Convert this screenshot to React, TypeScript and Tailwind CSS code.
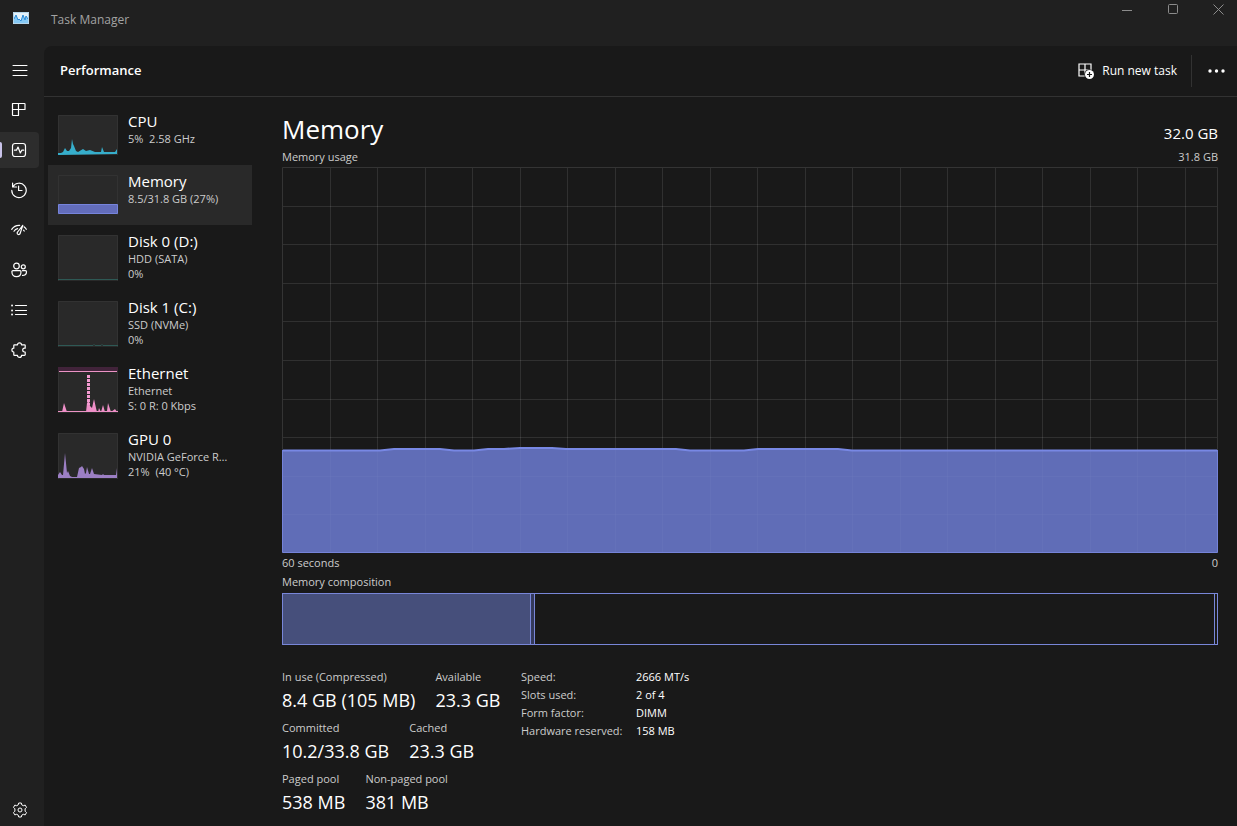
import type { ReactNode } from 'react';
import clsx from 'clsx';

const Icon = ({ children }: { children: ReactNode }) => (
  <svg
    width="18"
    height="18"
    viewBox="0 0 18 18"
    fill="none"
    stroke="currentColor"
    strokeWidth="1.2"
    strokeLinecap="round"
    strokeLinejoin="round"
    aria-hidden="true"
  >
    {children}
  </svg>
);

const navItems = [
  {
    label: 'Processes',
    icon: (
      <Icon>
        <path d="M2.5 2.5h12a.5.5 0 0 1 .5.5v5.5H8.5v6H3a.5.5 0 0 1-.5-.5zM8.5 2.5v6M2.5 8.5h6" />
      </Icon>
    ),
  },
  {
    label: 'Performance',
    active: true,
    icon: (
      <Icon>
        <rect x="2.5" y="2.5" width="13" height="13" rx="2.5" />
        <path d="M4.5 9.2h2L8 6l2.3 6 1.5-2.8h1.9" />
      </Icon>
    ),
  },
  {
    label: 'App history',
    icon: (
      <Icon>
        <path d="M2.6 2v4h4M2.9 5.6A7.2 7.2 0 1 1 1.8 9.4M8.6 5v4.5H12" />
      </Icon>
    ),
  },
  {
    label: 'Startup apps',
    icon: (
      <Icon>
        <path d="M1.7 8.3a9 9 0 0 1 8-4M14 5.8a9 9 0 0 1 2.3 2.5M4 10.2a6 6 0 0 1 3.6-2.6M13.6 9.2l.6.8" />
        <path d="M12.8 4.4 7.6 11a1.5 1.5 0 1 0 2.5 1.5z" />
      </Icon>
    ),
  },
  {
    label: 'Users',
    icon: (
      <Icon>
        <circle cx="6.5" cy="5" r="2.8" />
        <circle cx="13.3" cy="5.8" r="2" />
        <path d="M3 9.7h7a1 1 0 0 1 1 1c0 3-1.6 5-4.500 5s-4.600-2-4.600-5a1 1 0 0 1 1.100-1zM12.500 9.700h3a1 1 0 0 1 1 1c0 2.300-1.300 3.700-4 3.700" />
      </Icon>
    ),
  },
  {
    label: 'Details',
    icon: (
      <Icon>
        <path d="M5.500 4.500h11M5.500 9.500h11M5.500 13.500h11" />
        <path d="M2 4.500h.1M2 9.500h.1M2 13.500h.1" strokeWidth="1.800" />
      </Icon>
    ),
  },
  {
    label: 'Services',
    icon: (
      <Icon>
        <path d="M4.500 3.800h3a2 2 0 0 1 4 0h3a.7.7 0 0 1 .7.7v2.700h-.6a1.900 1.900 0 0 0 0 3.800h.6v2.700a.7.7 0 0 1-.7.7h-3a2 2 0 0 1-4 0h-3a.7.7 0 0 1-.7-.7V11a1.900 1.900 0 0 1 0-3.800V4.500a.7.7 0 0 1 .7-.7z" />
      </Icon>
    ),
  },
];

type Resource = {
  name: string;
  lines: string[];
  chart: ReactNode;
  selected?: boolean;
};

const resources: Resource[] = [
  {
    name: 'CPU',
    lines: ['5%  2.58 GHz'],
    chart: (
      <path
        d="M0 40v-2h3l2-1 2-4 2 3h2l2-3 1-9 1 5 1 2 2 5 2 1 5-3 3 2 4-1 5 2h6l1-5 2 5 11 0 2-3v5z"
        fill="#36aecb"
      />
    ),
  },
  {
    name: 'Memory',
    lines: ['8.5/31.8 GB (27%)'],
    selected: true,
    chart: <path d="M.5 29.500h59v9H.5z" fill="#636dbb" stroke="#7684dc" />,
  },
  {
    name: 'Disk 0 (D:)',
    lines: ['HDD (SATA)', '0%'],
    chart: <path d="M0 44.500h60" stroke="#2e5955" />,
  },
  {
    name: 'Disk 1 (C:)',
    lines: ['SSD (NVMe)', '0%'],
    chart: <path d="M0 44.500h35l1-1 1 1h6l1-1 1 1h15" stroke="#2e5955" />,
  },
  {
    name: 'Ethernet',
    lines: ['Ethernet', 'S: 0 R: 0 Kbps'],
    chart: (
      <>
        <path d="M0 0h60v4H0z" fill="#41233a" />
        <path d="M1 4.500h58M0 44.500h60" stroke="#ec93c5" />
        <path
          d="M4 45l2-9 2 6 1 3zM28 45l1-9 2-3 1 6 2 2 2-9 2 9 1 4zM40 45l1-4 2 4 2-7 2 7 2-1 1-8 3 9 4-3 2 3z"
          fill="#ee8fc7"
        />
        <path d="M30.500 8v30" stroke="#f49ad0" strokeWidth="3" strokeDasharray="3 1" />
      </>
    ),
  },
  {
    name: 'GPU 0',
    lines: ['NVIDIA GeForce R…', '21%  (40 °C)'],
    chart: (
      <path
        d="M0 45v-3l2-3 2 3h1l2-22 2 20 1-2 2 5 2 1h5l2-9 2-1 1-1 2 3 1 5 1-1 1-6 2 7h1l2-6 2 6 8 1 1-1 1 1 12 0 1-7v10z"
        fill="#9c7fc4"
      />
    ),
  },
];

const stats = [
  [
    ['In use (Compressed)', '8.4 GB (105 MB)'],
    ['Available', '23.3 GB'],
  ],
  [
    ['Committed', '10.2/33.8 GB'],
    ['Cached', '23.3 GB'],
  ],
  [
    ['Paged pool', '538 MB'],
    ['Non-paged pool', '381 MB'],
  ],
];

const hardware = [
  ['Speed:', '2666 MT/s'],
  ['Slots used:', '2 of 4'],
  ['Form factor:', 'DIMM'],
  ['Hardware reserved:', '158 MB'],
];

const TitleBar = () => (
  <header className="flex h-[46px] shrink-0 items-start justify-between">
    <div className="flex h-10 items-center gap-[22px] pl-[13px]">
      <svg width="16" height="12" viewBox="0 0 16 12" className="-mt-1" aria-hidden="true">
        <path d="M0 0h16v12H0z" fill="#e4f2fb" />
        <path d="M1 11V7l2-4 2 5 1-1 2 2 2-6 2 5 1-4 2 3v4z" fill="#86c9f5" />
        <path d="M1 7l2-4 2 5 1-1 2 2 2-6 2 5 1-4 2 3" fill="none" stroke="#2a8bd8" />
        <path d="M.5.5h15v11H.5z" fill="none" stroke="#b5d5ea" />
      </svg>
      <span className="text-[12px] text-[#a3a3a3]">Task Manager</span>
    </div>
    <div className="flex text-[#8c8c8c]">
      <button type="button" aria-label="Minimize" className="flex h-5 w-[45px] items-center justify-center">
        <svg width="11" height="11" viewBox="0 0 11 11" stroke="currentColor">
          <path d="M0 5.500h10" />
        </svg>
      </button>
      <button type="button" aria-label="Maximize" className="flex h-[18px] w-[46px] items-center justify-center">
        <svg width="11" height="11" viewBox="0 0 11 11" fill="none" stroke="currentColor">
          <rect x=".5" y=".5" width="9" height="9" rx="1" />
        </svg>
      </button>
      <button type="button" aria-label="Close" className="flex h-[18px] w-[41px] items-center justify-center pl-1">
        <svg width="11" height="11" viewBox="0 0 11 11" stroke="currentColor">
          <path d="M.5.5l10 10M10.500.5l-10 10" />
        </svg>
      </button>
    </div>
  </header>
);

const Sidebar = () => (
  <nav className="flex w-11 shrink-0 flex-col gap-1 pt-1.5 pb-[-2px]">
    <button type="button" aria-label="Open navigation" className="flex h-9 w-[39px] items-center justify-center">
      <Icon>
        <path d="M2 4.500h14M2 9.500h14M2 14.500h14" strokeWidth="1" />
      </Icon>
    </button>
    {navItems.map((item) => (
      <button
        key={item.label}
        type="button"
        aria-label={item.label}
        className={clsx(
          'flex h-9 w-[39px] items-center rounded-r',
          item.active && 'bg-[#2d2d2d]'
        )}
      >
        <span className={clsx('h-4 w-0.5 rounded-r', item.active && 'bg-[#c9c3ea]')} />
        <span className="pl-2">{item.icon}</span>
      </button>
    ))}
    <button type="button" aria-label="Settings" className="mt-auto flex h-8 w-[39px] items-center justify-center">
      <svg width="16" height="16" viewBox="0 0 16 16" fill="none" stroke="currentColor" strokeLinejoin="round">
        <circle cx="8" cy="8" r="2" />
        <path d="M6.700 1h2.600l.5 1.900 1.500.8 1.900-.6 1.300 2.300-1.400 1.400v2.400l1.400 1.400-1.300 2.300-1.900-.6-1.500.8-.5 1.900H6.700l-.5-1.900-1.500-.8-1.900.6-1.300-2.300 1.400-1.400V6.800L1.500 5.400l1.300-2.300 1.900.6 1.500-.8z" />
      </svg>
    </button>
  </nav>
);

const ResourceItem = ({ name, lines, chart, selected }: Resource) => {
  const height = lines.length > 1 ? 46 : 40;

  return (
    <button
      type="button"
      className={clsx('flex w-full gap-2.5 p-2.5 text-left', selected && 'bg-[#292929]')}
    >
      <svg width="60" height={height} viewBox={`0 0 60 ${height}`} fill="none" className="shrink-0 bg-[#292929]">
        <path d={`M.5 ${height}V.5h59V${height}`} stroke="#323232" />
        {chart}
      </svg>
      <span className="-mt-1 block min-w-0">
        <span className="block text-[15px] leading-5 text-white">{name}</span>
        {lines.map((line) => (
          <span key={line} className="block text-[11px] leading-[15px] whitespace-pre text-[#cccccc]">
            {line}
          </span>
        ))}
      </span>
    </button>
  );
};

const verticalLines = Array.from({ length: 19 }, (_, i) => Math.round((i + 1) * 47.5) + 0.5);
const horizontalLines = Array.from({ length: 9 }, (_, i) => Math.round((i + 1) * 38.6) + 0.5);
const usage =
  'M1 283.500H98L112 282H158L172 283.500H192L206 282H222L238 281H270L284 282H394L408 283.500H462L476 282H556L570 283.500H935';

const UsageChart = () => (
  <div className="min-h-0 flex-1">
    <svg width="100%" height="100%" viewBox="0 0 936 386" preserveAspectRatio="none" fill="none" className="block">
      <path d={`${usage}V385.500H1z`} fill="#606eb7" />
      {verticalLines.map((x) => (
        <path key={x} d={`M${x} 0V386`} stroke="#fff" strokeOpacity=".1" />
      ))}
      {horizontalLines.map((y) => (
        <path key={y} d={`M0 ${y}H936`} stroke="#fff" strokeOpacity=".1" />
      ))}
      <path d={`${usage}V385.500H1z`} fill="#606eb7" fillOpacity=".75" />
      <path d="M.5 386V.5h935V386" stroke="#343434" />
      <path d="M.5 283V385.500H935.500V283" stroke="#7583d8" />
      <path d={usage} stroke="#7888e4" strokeWidth="2" />
    </svg>
  </div>
);

const MemoryPanel = () => (
  <section className="flex min-w-0 flex-1 flex-col pr-[19px] pl-[30px] text-[11px] leading-4 text-[#cccccc]">
    <div className="flex items-end justify-between pt-3.5 text-white">
      <h2 className="text-[26px] leading-9">Memory</h2>
      <span className="text-[15px] leading-7">32.0 GB</span>
    </div>
    <div className="flex justify-between pt-0.5 pb-0.5">
      <span>Memory usage</span>
      <span>31.8 GB</span>
    </div>
    <UsageChart />
    <div className="flex justify-between pt-0.5">
      <span>60 seconds</span>
      <span>0</span>
    </div>
    <div className="pt-[3px] pb-[3px]">Memory composition</div>
    <div className="flex h-[52px] shrink-0 border border-[#7886d8]">
      <div className="w-[26.600%] border-r border-[#7886d8] bg-[#464f7b]" />
      <div className="w-1 border-r border-[#7886d8] bg-[#343a5c]" />
      <div className="mr-0.5 flex-1 border-r border-[#7886d8]" />
    </div>
    <div className="flex h-[181px] shrink-0 pt-6">
      <div className="flex w-[239px] flex-col">
        {stats.map((row) => (
          <dl key={row[0][0]} className="flex h-[51px] gap-5 whitespace-nowrap">
            {row.map(([label, value]) => (
              <div key={label}>
                <dt>{label}</dt>
                <dd className="text-[18px] leading-[30px] text-white">{value}</dd>
              </div>
            ))}
          </dl>
        ))}
      </div>
      <table className="self-start">
        <tbody>
          {hardware.map(([label, value]) => (
            <tr key={label} className="h-[18px]">
              <th scope="row" className="w-[115px] p-0 text-left align-top font-normal">
                {label}
              </th>
              <td className="p-0 align-top text-white">{value}</td>
            </tr>
          ))}
        </tbody>
      </table>
    </div>
  </section>
);

const App = () => {
  return (
    <div className="flex h-screen flex-col overflow-hidden bg-[#202020] font-['Open_Sans','Noto_Sans',sans-serif] text-white">
      <TitleBar />
      <div className="flex min-h-0 flex-1">
        <Sidebar />
        <main className="flex min-w-0 flex-1 flex-col rounded-tl-lg bg-[#191919]">
          <div className="flex h-[51px] shrink-0 items-center justify-between border-b border-[#323232] pr-3 pl-4">
            <h1 className="text-[13px] font-semibold">Performance</h1>
            <div className="flex items-center">
              <button type="button" className="flex items-center gap-2 pr-3.5 text-[12px]">
                <svg width="16" height="16" viewBox="0 0 16 16" fill="none" aria-hidden="true">
                  <path d="M7 13H1V1h12v6M7 1v12M1 7h12" stroke="currentColor" strokeWidth="1.200" />
                  <circle cx="11.500" cy="11.500" r="5.300" fill="#191919" />
                  <circle cx="11.500" cy="11.500" r="4.500" fill="currentColor" />
                  <path d="M11.500 9v5M9 11.500h5" stroke="#191919" strokeWidth="1.200" />
                </svg>
                Run new task
              </button>
              <span className="h-8 w-px bg-[#323232]" />
              <button type="button" aria-label="More options" className="pl-4">
                <svg width="17" height="4" viewBox="0 0 17 4" fill="currentColor">
                  <circle cx="2" cy="2" r="1.700" />
                  <circle cx="8.500" cy="2" r="1.700" />
                  <circle cx="15" cy="2" r="1.700" />
                </svg>
              </button>
            </div>
          </div>
          <div className="flex min-h-0 flex-1">
            <div className="w-[208px] shrink-0 pt-2 pl-1">
              {resources.map((resource) => (
                <ResourceItem key={resource.name} {...resource} />
              ))}
            </div>
            <MemoryPanel />
          </div>
        </main>
      </div>
    </div>
  );
};

export default App;
